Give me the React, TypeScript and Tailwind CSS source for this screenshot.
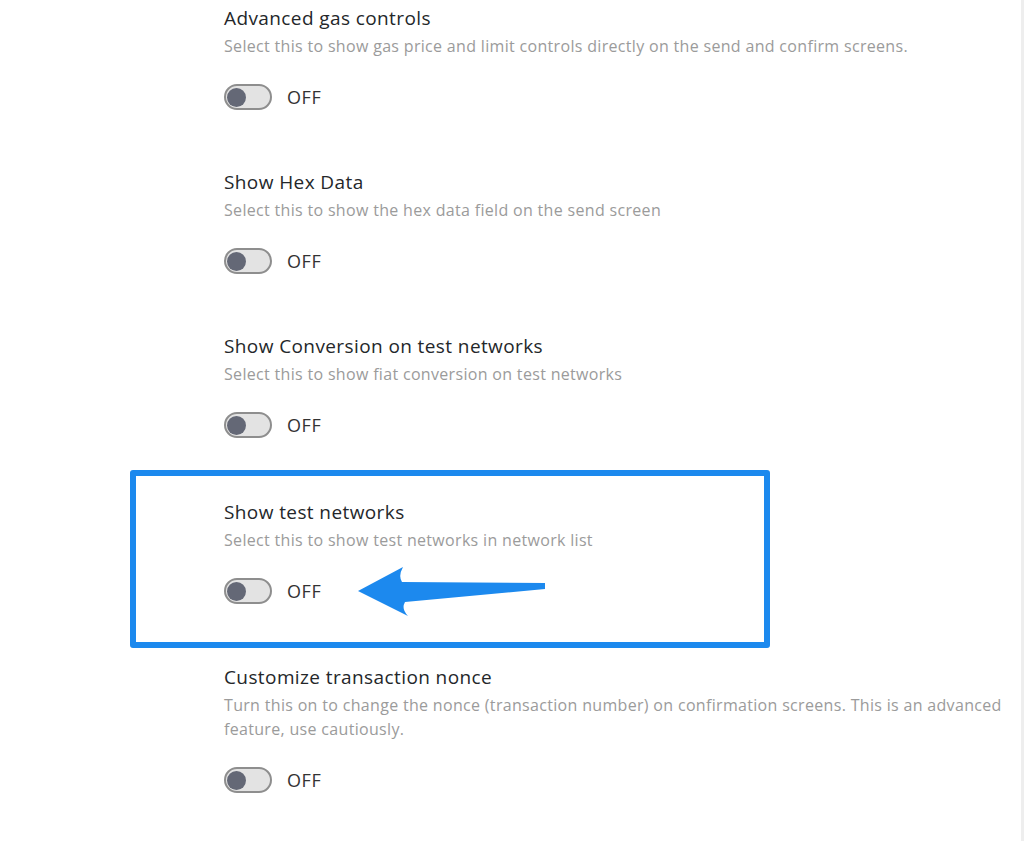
import React from 'react';

const font = { fontFamily: '"Open Sans", Lato, sans-serif' };

const Toggle: React.FC = () => (
  <div className="flex h-[26px] w-12 items-center rounded-full border-2 border-[#8e8e8e] bg-[#e3e3e3] pl-[1px]">
    <div className="h-[19px] w-[19px] rounded-full bg-[#646876]" />
  </div>
);

type SettingProps = {
  title: string;
  desc: string;
  children?: React.ReactNode;
};

const Setting: React.FC<SettingProps> = ({ title, desc, children }) => (
  <div>
    <h3 className="text-[19px] leading-6 tracking-[0.4px] text-[#24272a]">{title}</h3>
    <p className="mt-1 text-[16px] leading-6 tracking-[0.32px] text-[#9b9b9b]">{desc}</p>
    <div className="mt-[26px] flex h-[26px] items-center">
      <Toggle />
      <span className="ml-[15px] text-[18px] leading-6 tracking-[0.6px] text-[#333333]">OFF</span>
      {children}
    </div>
  </div>
);

const Arrow: React.FC = () => (
  <svg width="192" height="56" viewBox="355 567 192 56" className="-my-[15px] ml-[34px] shrink-0">
    <path
      d="M358 595 L403 571 Q398 580 402 586 L545 587 L545 593 L405 606 Q401 613 408 620 Z"
      fill="#1c89ee"
    />
  </svg>
);

export default function App() {
  return (
    <div className="flex min-h-screen bg-white" style={font}>
      <div className="flex-1 pl-[130px] pt-[6px]">
        <div className="space-y-[60px] pl-[94px]">
          <Setting
            title="Advanced gas controls"
            desc="Select this to show gas price and limit controls directly on the send and confirm screens."
          />
          <Setting title="Show Hex Data" desc="Select this to show the hex data field on the send screen" />
          <Setting
            title="Show Conversion on test networks"
            desc="Select this to show fiat conversion on test networks"
          />
        </div>

        <div className="mt-[32px] w-[640px] rounded-[3px] border-[6px] border-[#1c89ee] pb-[38px] pl-[88px] pt-[24px]">
          <Setting title="Show test networks" desc="Select this to show test networks in network list">
            <Arrow />
          </Setting>
        </div>

        <div className="mt-[17px] w-[880px] pb-10 pl-[94px]">
          <Setting
            title="Customize transaction nonce"
            desc="Turn this on to change the nonce (transaction number) on confirmation screens. This is an advanced feature, use cautiously."
          />
        </div>
      </div>
      <div className="w-[3px] bg-[#eeeeee]" />
    </div>
  );
}
